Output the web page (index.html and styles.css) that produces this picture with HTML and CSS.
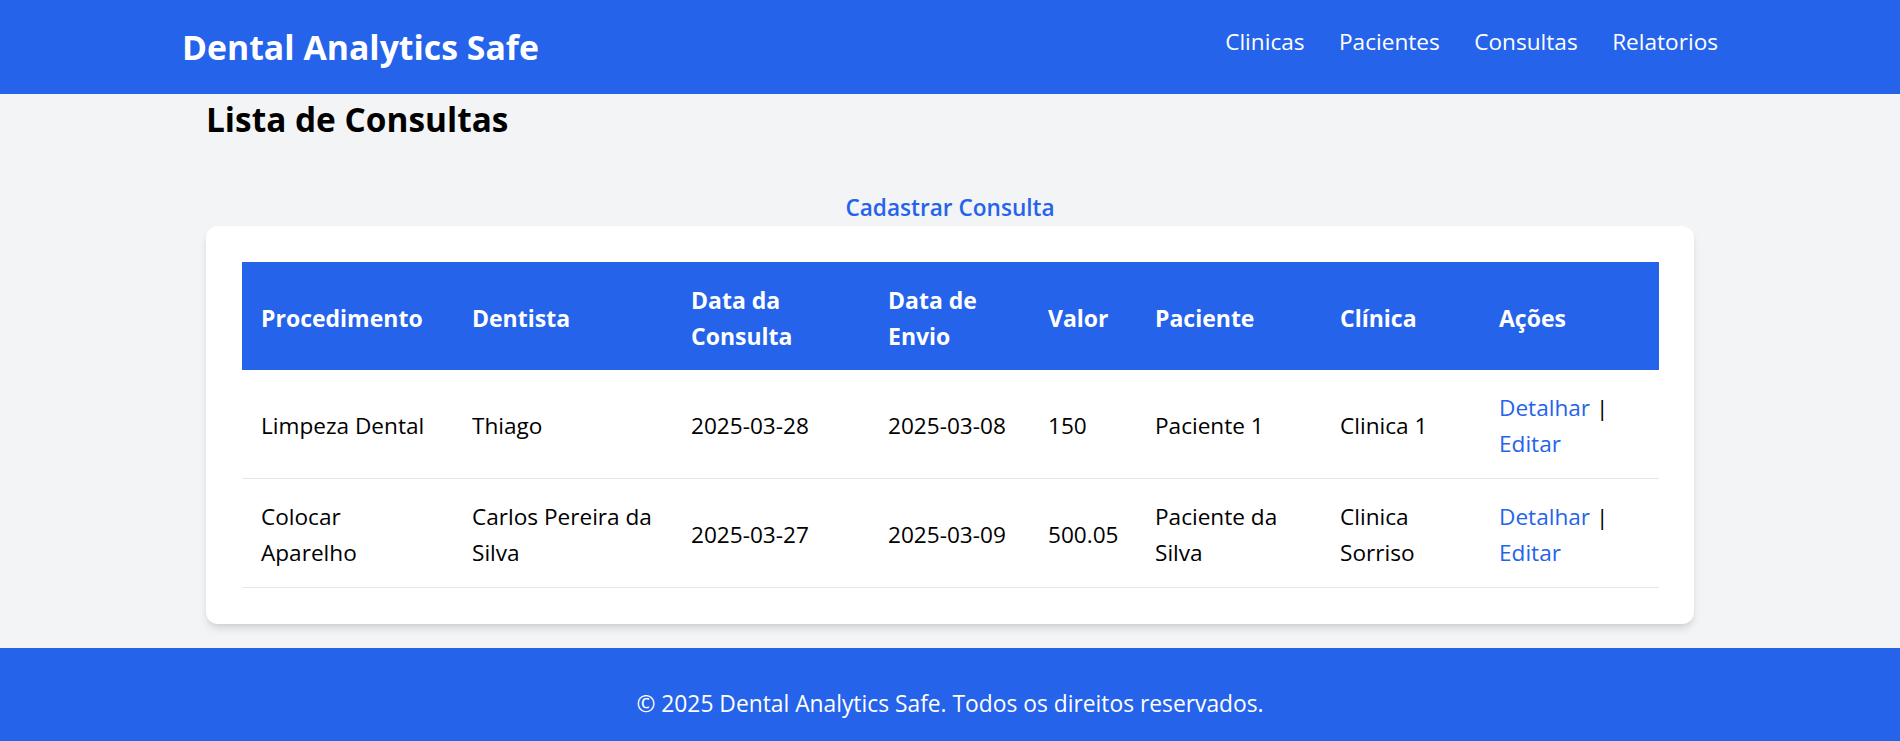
FILE: index.html
```html
<!DOCTYPE html>
<html lang="pt-BR">
<head>
<meta charset="utf-8">
<title>Dental Analytics Safe</title>
<link rel="stylesheet" href="styles.css">
</head>
<body>
<header class="topbar">
  <div class="topbar-inner">
    <h1 class="brand">Dental Analytics Safe</h1>
    <nav class="nav">
      <a href="#">Clinicas</a>
      <a href="#">Pacientes</a>
      <a href="#">Consultas</a>
      <a href="#">Relatorios</a>
    </nav>
  </div>
</header>
<main class="main">
  <h2 class="page-title">Lista de Consultas</h2>
  <div class="add-row"><a href="#" class="add-link">Cadastrar Consulta</a></div>
  <div class="card">
    <table class="table">
      <colgroup>
        <col class="c1"><col class="c2"><col class="c3"><col class="c4">
        <col class="c5"><col class="c6"><col class="c7"><col class="c8">
      </colgroup>
      <thead>
        <tr>
          <th>Procedimento</th>
          <th>Dentista</th>
          <th>Data da Consulta</th>
          <th>Data de Envio</th>
          <th>Valor</th>
          <th>Paciente</th>
          <th>Clínica</th>
          <th>Ações</th>
        </tr>
      </thead>
      <tbody>
        <tr>
          <td>Limpeza Dental</td>
          <td>Thiago</td>
          <td>2025-03-28</td>
          <td>2025-03-08</td>
          <td>150</td>
          <td>Paciente 1</td>
          <td>Clinica 1</td>
          <td><a href="#" class="act">Detalhar</a> | <a href="#" class="act">Editar</a></td>
        </tr>
        <tr>
          <td>Colocar Aparelho</td>
          <td>Carlos Pereira da Silva</td>
          <td>2025-03-27</td>
          <td>2025-03-09</td>
          <td>500.05</td>
          <td>Paciente da Silva</td>
          <td>Clinica Sorriso</td>
          <td><a href="#" class="act">Detalhar</a> | <a href="#" class="act">Editar</a></td>
        </tr>
      </tbody>
    </table>
  </div>
</main>
<footer class="footer">
  <p>© 2025 Dental Analytics Safe. Todos os direitos reservados.</p>
</footer>
</body>
</html>
```

FILE: styles.css
```css
* { box-sizing: border-box; }

html, body {
  margin: 0;
  padding: 0;
}

body {
  background: #f3f4f6;
  font-family: "Open Sans", "Noto Sans", sans-serif;
  font-size: 22.6px;
  line-height: 36px;
  color: #000;
  overflow: hidden;
}

a { text-decoration: none; }

.topbar {
  background: #2563eb;
  height: 94px;
}

.topbar-inner {
  width: 1536px;
  margin: 0 auto;
  display: flex;
  justify-content: space-between;
  align-items: flex-start;
  padding-top: 23px;
}

.brand {
  margin: 0;
  color: #fff;
  font-size: 33.8px;
  font-weight: 700;
  line-height: 48px;
}

.nav {
  display: flex;
  gap: 34.5px;
  margin-top: 1px;
}

.nav a {
  color: #fff;
  font-size: 22.6px;
  line-height: 36px;
}

.main {
  width: 1536px;
  margin: 0 auto;
  padding: 0 24px;
}

.page-title {
  margin: 0 0 46px;
  padding-top: 1px;
  font-size: 33.4px;
  font-weight: 700;
  line-height: 48px;
}

.add-row {
  text-align: center;
  line-height: 36px;
  padding-top: 1px;
}

.add-link {
  color: #2563eb;
  font-weight: 600;
}

.card {
  background: #fff;
  border-radius: 12px;
  padding: 36px;
  box-shadow: 0 6px 9px -1.5px rgba(0,0,0,0.1), 0 3px 6px -3px rgba(0,0,0,0.1);
}

.table {
  width: 100%;
  border-collapse: collapse;
  table-layout: fixed;
}

.c1 { width: 211px; }
.c2 { width: 219px; }
.c3 { width: 197px; }
.c4 { width: 160px; }
.c5 { width: 107px; }
.c6 { width: 185px; }
.c7 { width: 159px; }
.c8 { width: 179px; }

.table th {
  background: #2563eb;
  color: #fff;
  font-size: 23px;
  font-weight: 700;
  text-align: left;
  padding: 19.5px 17px 16.5px 19px;
  vertical-align: middle;
}

.table td {
  padding: 19.5px 17px 16.5px 19px;
  vertical-align: middle;
}

.table tbody tr {
  border-bottom: 1px solid #e5e7eb;
}

.act {
  color: #2563eb;
}

.footer {
  background: #2563eb;
  color: #fff;
  text-align: center;
  margin-top: 24px;
  padding: 38px 0 19px;
}

.footer p {
  margin: 0;
  line-height: 36px;
  font-size: 22.8px;
}
```
